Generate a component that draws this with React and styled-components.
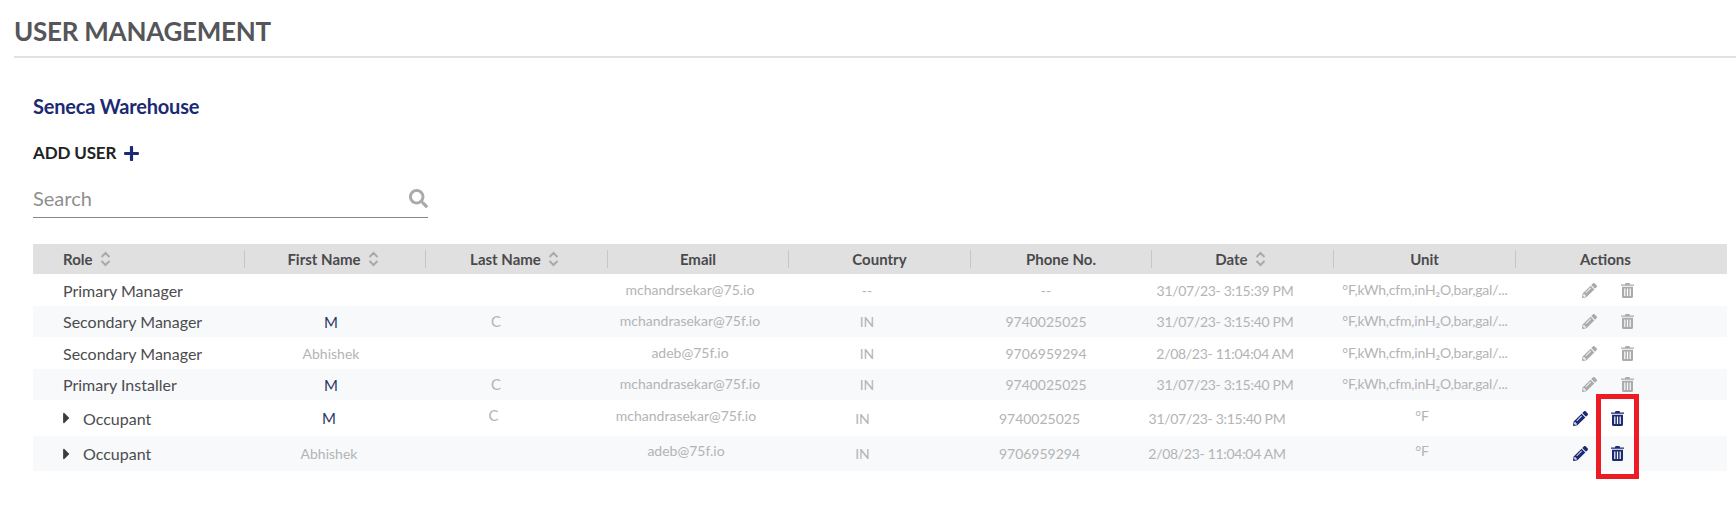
import styled, { createGlobalStyle } from "styled-components"
import { FaCaretRight, FaPencilAlt, FaPlus, FaSearch } from "react-icons/fa"

const navy = "#1b2a72"
const DATA_COLUMNS = "225px 146px 184px 204px 150px 208px 150px 250px 1fr"
const NESTED_COLUMNS = "221px 150px 179px 206px 147px 207px 148px 262px 1fr"

const GlobalStyle = createGlobalStyle`
  html, body {
    margin: 0;
    background: #fff;
    font-family: Lato, "Open Sans", sans-serif;
  }
`

const Page = styled.div`
  position: relative;
  min-height: 532px;
  padding-left: 14px;
`

const PageTitle = styled.h1`
  margin: 0;
  height: 58px;
  box-sizing: border-box;
  padding-top: 15px;
  border-bottom: 2px solid #e1e1e1;
  font-size: 26px;
  line-height: 32px;
  font-weight: 700;
  letter-spacing: -0.25px;
  color: #55565a;
`

const Content = styled.div`
  padding: 35px 9px 0 19px;
`

const SiteName = styled.h2`
  margin: 0;
  font-size: 20px;
  line-height: 26px;
  font-weight: 700;
  letter-spacing: -0.2px;
  color: ${navy};
`

const AddUser = styled.div`
  display: flex;
  align-items: center;
  gap: 7px;
  margin-top: 21px;
  font-size: 17px;
  line-height: 26px;
  font-weight: 700;
  letter-spacing: -0.15px;
  color: #222;

  svg {
    color: ${navy};
    font-size: 17px;
  }
`

const SearchBox = styled.div`
  display: flex;
  align-items: center;
  width: 395px;
  height: 41px;
  margin-top: 11px;
  padding-top: 2px;
  box-sizing: border-box;
  border-bottom: 1px solid #888;
  color: #aaa;

  input {
    flex: 1;
    min-width: 0;
    border: 0;
    padding: 0;
    outline: 0;
    background: none;
    font: 20px Lato, sans-serif;
  }
  input::placeholder {
    color: #8f8f8f;
    opacity: 1;
  }
  svg {
    font-size: 19px;
  }
`

const HeaderRow = styled.div`
  display: grid;
  grid-template-columns: 211px 181px 182px 181px 182px 181px 182px 182px 1fr;
  align-items: center;
  height: 30px;
  margin-top: 26px;
  background: #e0e0e0;
`

const HeaderCell = styled.div`
  display: flex;
  align-items: center;
  justify-content: ${p => (p.$left ? "flex-start" : "center")};
  gap: 7px;
  height: 18px;
  padding: ${p => (p.$left ? "0 0 0 30px" : p.$pad ? "0 32px 0 0" : p.$sort ? "0 4px 0 0" : "0")};
  border-left: ${p => (p.$left ? "0" : "1px solid #c6c6c6")};
  font-size: 15px;
  font-weight: 700;
  color: #4a4a4c;
`

const Row = styled.div`
  display: grid;
  grid-template-columns: ${p => (p.$nested ? NESTED_COLUMNS : DATA_COLUMNS)};
  align-items: center;
  height: ${p => p.$height}px;
  background: ${p => (p.$striped ? "#f7f9fb" : "#fff")};
`

const RoleCell = styled.div`
  display: flex;
  align-items: center;
  gap: 13px;
  padding-left: 30px;
  font-size: 16px;
  color: #4c4c4e;

  svg {
    width: 7px;
    height: 18px;
    color: #3c3c3c;
  }
`

const Cell = styled.div`
  text-align: center;
  white-space: nowrap;
  font-size: ${p => (p.$small ? 14 : 15)}px;
  letter-spacing: ${p => p.$tight || 0}px;
  color: ${p => (p.$dark ? "#2b3566" : "#b4b4b4")};
  transform: translateY(${p => p.$raise || 0}px);
`

const Actions = styled.div`
  display: flex;
  align-items: center;
  gap: ${p => (p.$active ? 23 : 24)}px;
  padding-left: ${p => (p.$active ? 20 : 32)}px;
  color: ${p => (p.$active ? navy : "#ababab")};
  font-size: 15px;
`

const Highlight = styled.div`
  position: absolute;
  left: 1596px;
  top: 394px;
  width: 43px;
  height: 85px;
  box-sizing: border-box;
  border: 5px solid #ed1c24;
`

const SortIcon = () => (
  <svg width="11" height="16" viewBox="0 0 11 16" fill="none" stroke="#a9a9a9" strokeWidth="2">
    <path d="M1.5 6 5.5 2l4 4M1.5 10l4 4 4-4" />
  </svg>
)

const TrashIcon = () => (
  <svg width="13" height="15" viewBox="0 0 13 15" fill="currentColor" fillRule="evenodd">
    <path d="M4.5 0h4l.5 1.4h4v1.4H0V1.4h4zM1 3.8h11V13.5A1.5 1.5 0 0 1 10.5 15h-8A1.5 1.5 0 0 1 1 13.5zM3.2 5.5v7.5h1.2V5.5zM5.9 5.5v7.5h1.2V5.5zM8.6 5.5v7.5h1.2V5.5z" />
  </svg>
)

const headers = [
  { label: "Role", sort: true, left: true },
  { label: "First Name", sort: true },
  { label: "Last Name", sort: true },
  { label: "Email" },
  { label: "Country" },
  { label: "Phone No." },
  { label: "Date", sort: true },
  { label: "Unit" },
  { label: "Actions", pad: true },
]

const UNITS = "°F,kWh,cfm,inH₂O,bar,gal/..."

const users = [
  { role: "Primary Manager", first: "", last: "", email: "mchandrsekar@75.io", country: "--", phone: "--", date: "31/07/23- 3:15:39 PM", unit: UNITS, height: 32 },
  { role: "Secondary Manager", first: "M", last: "C", email: "mchandrasekar@75f.io", country: "IN", phone: "9740025025", date: "31/07/23- 3:15:40 PM", unit: UNITS, height: 31 },
  { role: "Secondary Manager", first: "Abhishek", last: "", email: "adeb@75f.io", country: "IN", phone: "9706959294", date: "2/08/23- 11:04:04 AM", unit: UNITS, height: 32 },
  { role: "Primary Installer", first: "M", last: "C", email: "mchandrasekar@75f.io", country: "IN", phone: "9740025025", date: "31/07/23- 3:15:40 PM", unit: UNITS, height: 31 },
  { role: "Occupant", nested: true, first: "M", last: "C", email: "mchandrasekar@75f.io", country: "IN", phone: "9740025025", date: "31/07/23- 3:15:40 PM", unit: "°F", height: 36 },
  { role: "Occupant", nested: true, first: "Abhishek", last: "", email: "adeb@75f.io", country: "IN", phone: "9706959294", date: "2/08/23- 11:04:04 AM", unit: "°F", height: 35 },
]

export default function App() {
  return (
    <Page>
      <GlobalStyle />
      <PageTitle>USER MANAGEMENT</PageTitle>
      <Content>
        <SiteName>Seneca Warehouse</SiteName>
        <AddUser>ADD USER <FaPlus /></AddUser>
        <SearchBox>
          <input placeholder="Search" />
          <FaSearch />
        </SearchBox>
        <HeaderRow>
          {headers.map(h => (
            <HeaderCell key={h.label} $left={h.left} $pad={h.pad} $sort={h.sort}>
              {h.label}
              {h.sort && <SortIcon />}
            </HeaderCell>
          ))}
        </HeaderRow>
        {users.map((u, i) => {
          const raise = u.nested ? -3 : -1
          return (
            <Row key={i} $nested={u.nested} $height={u.height} $striped={i % 2 === 1}>
              <RoleCell>
                {u.nested && <FaCaretRight />}
                {u.role}
              </RoleCell>
              <Cell $dark={u.first === "M"} $small={u.first !== "M"}>{u.first}</Cell>
              <Cell $raise={raise}>{u.last}</Cell>
              <Cell $small $raise={raise}>{u.email}</Cell>
              <Cell $small>{u.country}</Cell>
              <Cell $small>{u.phone}</Cell>
              <Cell $small $tight={-0.3}>{u.date}</Cell>
              <Cell $small $tight={-0.2} $raise={raise}>{u.unit}</Cell>
              <Actions $active={u.nested}>
                <FaPencilAlt />
                <TrashIcon />
              </Actions>
            </Row>
          )
        })}
      </Content>
      <Highlight />
    </Page>
  )
}
